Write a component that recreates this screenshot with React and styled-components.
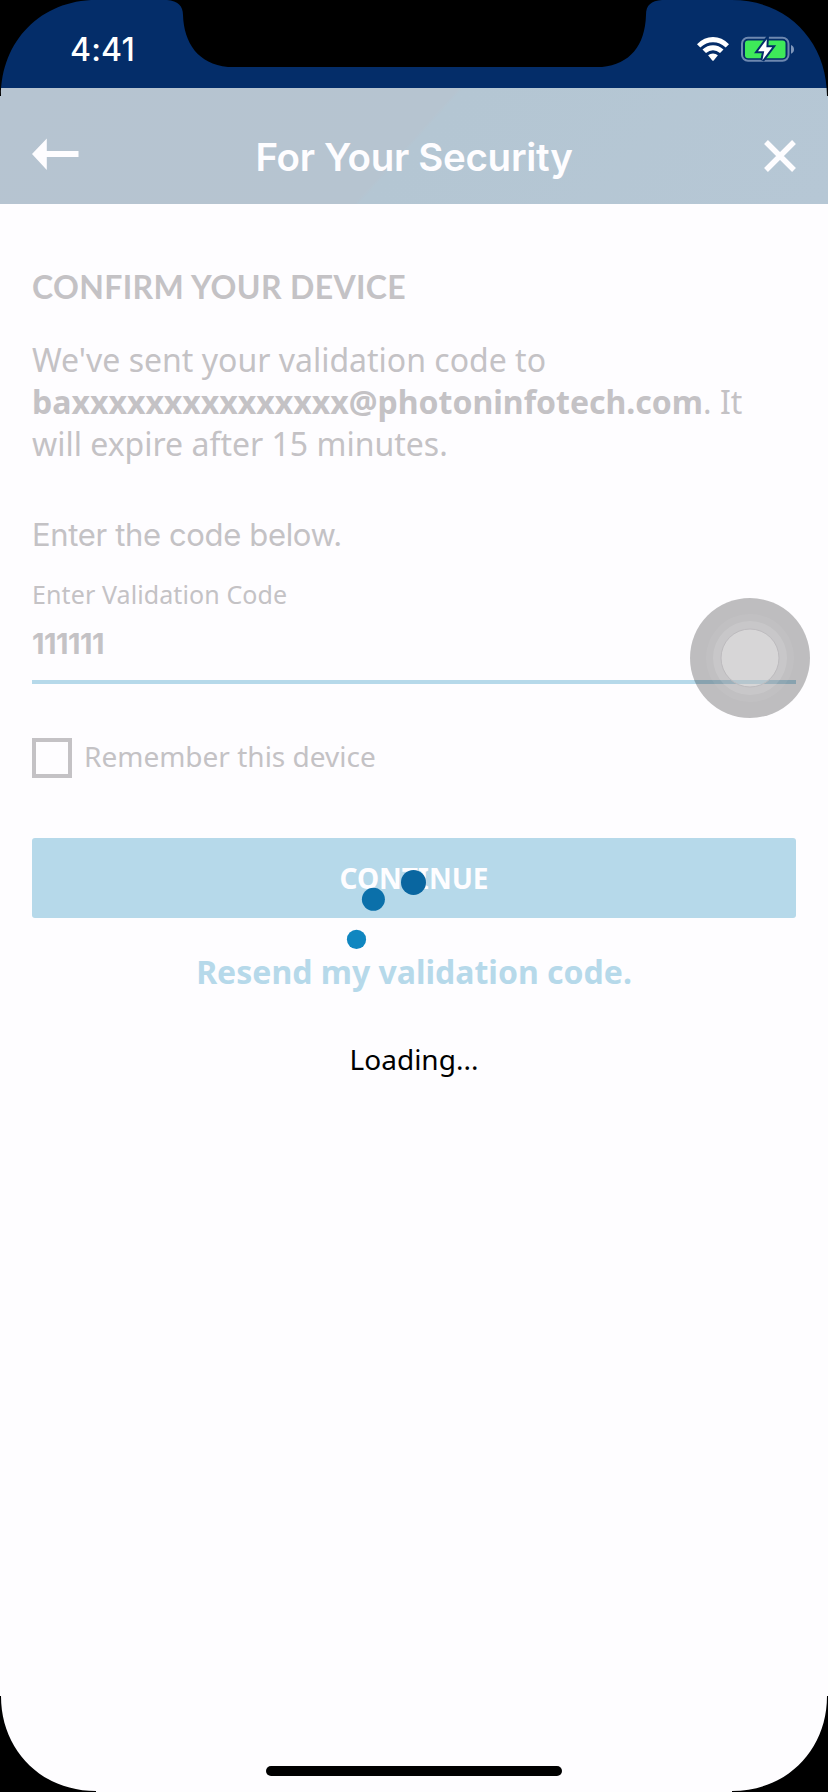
import React from "react";
import styled, { createGlobalStyle } from "styled-components";

const GlobalStyle = createGlobalStyle`
  * { box-sizing: border-box; }
  body { margin: 0; background: #fefdff; }
  h1, h2, p { margin: 0; }
`;

const ui = `"Inter", sans-serif`;
const display = `"Lato", sans-serif`;
const body = `"Noto Sans", sans-serif`;
const muted = "#c4c2c5";
const paleBlue = "#b6d9ea";

const Screen = styled.div`
  position: relative;
  width: 828px;
  height: 1792px;
  overflow: hidden;
  background: #fefdff;
  display: flex;
  flex-direction: column;
`;

const StatusBar = styled.div`
  height: 88px;
  flex: none;
  padding: 31px 33px 0 70px;
  display: flex;
  justify-content: space-between;
  align-items: flex-start;
  background: #042d69;
`;

const Clock = styled.span`
  font: 500 32px/38px ${ui};
  letter-spacing: 0.2px;
  color: #fff;
`;

const StatusIcons = styled.div`
  display: flex;
  gap: 12px;
  padding-top: 5px;
`;

const Header = styled.header`
  height: 116px;
  flex: none;
  padding: 0 31px;
  display: flex;
  align-items: center;
  justify-content: space-between;
  background: linear-gradient(132deg, #b6c4d1 0%, #b6c4d0 49.2%, #b4c6d3 49.7%, #b6c7d5 100%);
`;

const Title = styled.h1`
  padding-top: 22px;
  font: 600 38.5px/48px ${ui};
  letter-spacing: -0.3px;
  color: #fefdff;
`;

const IconButton = styled.button`
  width: 48px;
  display: flex;
  justify-content: ${(p) => p.$align};
  margin: ${(p) => p.$top}px 0 0;
  padding: 0;
  border: 0;
  background: none;
`;

const Form = styled.main`
  padding: 63px 32px 0;
  display: flex;
  flex-direction: column;
  color: ${muted};
`;

const Heading = styled.h2`
  font: 700 32px/40px ${display};
  letter-spacing: 0.35px;
  white-space: nowrap;
`;

const Message = styled.p`
  margin-top: 32px;
  font: 400 32px/42px ${body};
`;

const Email = styled.strong`
  font-weight: 700;
`;

const Prompt = styled.p`
  margin-top: 50px;
  font: 400 31px/40px ${ui};
  letter-spacing: -0.35px;
`;

const Field = styled.label`
  margin-top: 22px;
  height: 107px;
  border-bottom: 4px solid ${paleBlue};
  display: flex;
  flex-direction: column;
  gap: 16px;
`;

const FieldLabel = styled.span`
  font: 400 25px/34px ${body};
  letter-spacing: 0.1px;
`;

const FieldValue = styled.span`
  font: 700 29px/34px ${ui};
  letter-spacing: -0.5px;
`;

const CheckRow = styled.label`
  margin-top: 54px;
  height: 40px;
  display: flex;
  gap: 12px;
`;

const Box = styled.span`
  width: 40px;
  height: 40px;
  border: 4px solid ${muted};
`;

const CheckLabel = styled.span`
  font: 400 28px/36px ${body};
`;

const Continue = styled.button`
  margin-top: 60px;
  height: 80px;
  border: 0;
  border-radius: 3px;
  padding: 0;
  background: ${paleBlue};
  color: #fefdff;
  font: 700 28px/38px ${body};
`;

const Resend = styled.a`
  margin-top: 32px;
  align-self: center;
  color: ${paleBlue};
  font: 700 32px/44px ${body};
`;

const Overlay = styled.div`
  position: absolute;
  left: 0;
  right: 0;
  top: 866px;
  display: flex;
  flex-direction: column;
  align-items: center;
`;

const LoadingText = styled.p`
  margin-top: 33px;
  color: #000;
  font: 400 28px/40px ${body};
`;

const TouchButton = styled.svg`
  position: absolute;
  left: 690px;
  top: 598px;
`;

const Bezel = styled.svg`
  position: absolute;
  inset: 0;
`;

const HomeBar = styled.div`
  position: absolute;
  left: 266px;
  top: 1766px;
  width: 296px;
  height: 10px;
  border-radius: 5px;
  background: #000;
`;

const Wifi = () => (
  <svg width="32" height="26" viewBox="0 0 32 26" fill="#fff">
    <path d="M0 8.2Q7 1 16 1T32 8.2L28.7 11.6Q23 6.2 16 6.2T3.3 11.6Z" />
    <path d="M5.5 13.6Q10.2 9.2 16 9.2T26.5 13.6L23 17Q19.7 14.2 16 14.2T9 17Z" />
    <path d="M11.1 19.3Q13.2 17.4 16 17.4T20.9 19.3L16.7 24.4Q16 25.1 15.3 24.4Z" />
  </svg>
);

const Battery = () => (
  <svg width="54" height="26" viewBox="0 0 54 26">
    <rect x="1" y="1.8" width="46.5" height="23" rx="6" fill="none" stroke="#6e88b0" strokeWidth="2" />
    <rect x="4" y="4.6" width="40.5" height="17.6" rx="3" fill="#3eea59" />
    <path d="M50 9Q53 10.4 53 13.4T50 17.8Z" fill="#7f96ba" />
    <path d="M25.8 3.2L17 15.2H23.2L21.4 24.2L31.2 11.2H25.4Z" fill="#fff" stroke="#042d69" strokeWidth="4" paintOrder="stroke" />
  </svg>
);

const BackArrow = () => (
  <svg width="48" height="32" viewBox="0 0 48 32" fill="#fefdff">
    <path d="M1 16L15.8 0.5V13H47.5V19H15.8V32Z" />
  </svg>
);

const CloseIcon = () => (
  <svg width="34" height="34" viewBox="0 0 34 34" stroke="#fefdff" strokeWidth="5.4">
    <path d="M3 3L31 31M31 3L3 31" />
  </svg>
);

const Spinner = () => (
  <svg width="140" height="140" viewBox="344 866 140 140">
    <circle cx="356.5" cy="939.4" r="9.6" fill="#1086c0" />
    <circle cx="373.4" cy="899.3" r="11.5" fill="#0b70aa" />
    <circle cx="413.5" cy="882.4" r="12.5" fill="#0966a0" />
  </svg>
);

export default function App() {
  return (
    <>
      <GlobalStyle />
      <Screen>
        <StatusBar>
          <Clock>4:41</Clock>
          <StatusIcons>
            <Wifi />
            <Battery />
          </StatusIcons>
        </StatusBar>
        <Header>
          <IconButton $top={16} $align="flex-start" aria-label="Back"><BackArrow /></IconButton>
          <Title>For Your Security</Title>
          <IconButton $top={20} $align="flex-end" aria-label="Close"><CloseIcon /></IconButton>
        </Header>
        <Form>
          <Heading>CONFIRM YOUR DEVICE</Heading>
          <Message>
            We've sent your validation code to <Email>baxxxxxxxxxxxxxxx@photoninfotech.com</Email>. It will expire after 15 minutes.
          </Message>
          <Prompt>Enter the code below.</Prompt>
          <Field>
            <FieldLabel>Enter Validation Code</FieldLabel>
            <FieldValue>111111</FieldValue>
          </Field>
          <CheckRow>
            <Box />
            <CheckLabel>Remember this device</CheckLabel>
          </CheckRow>
          <Continue>CONTINUE</Continue>
          <Resend>Resend my validation code.</Resend>
        </Form>
        <Overlay>
          <Spinner />
          <LoadingText>Loading...</LoadingText>
        </Overlay>
        <TouchButton width="120" height="120" viewBox="0 0 120 120">
          <circle cx="60" cy="60" r="60" fill="#000" fillOpacity="0.25" />
          <circle cx="60" cy="60" r="44" fill="#fff" fillOpacity="0.06" />
          <circle cx="60" cy="60" r="37" fill="#fff" fillOpacity="0.12" />
          <circle cx="60" cy="60" r="29" fill="#fff" fillOpacity="0.27" stroke="#bdbbbe" strokeWidth="1" />
        </TouchButton>
        <HomeBar />
        <Bezel width="828" height="1792" viewBox="0 0 828 1792">
          <path d="M0 0H96C41 0 1 41 1 96H0Z" />
          <path d="M828 0H732C787 0 827 41 827 96H828Z" />
          <path d="M0 1792V1696H1C1 1750 41 1791 96 1791V1792Z" />
          <path d="M828 1792V1696H827C827 1750 787 1791 732 1791V1792Z" />
          <path d="M167 0C178 1 183 6 183 15C184 43 198 64 228 67H602C630 64 645 46 646 15C646 5 651 1 662 0Z" />
        </Bezel>
      </Screen>
    </>
  );
}
